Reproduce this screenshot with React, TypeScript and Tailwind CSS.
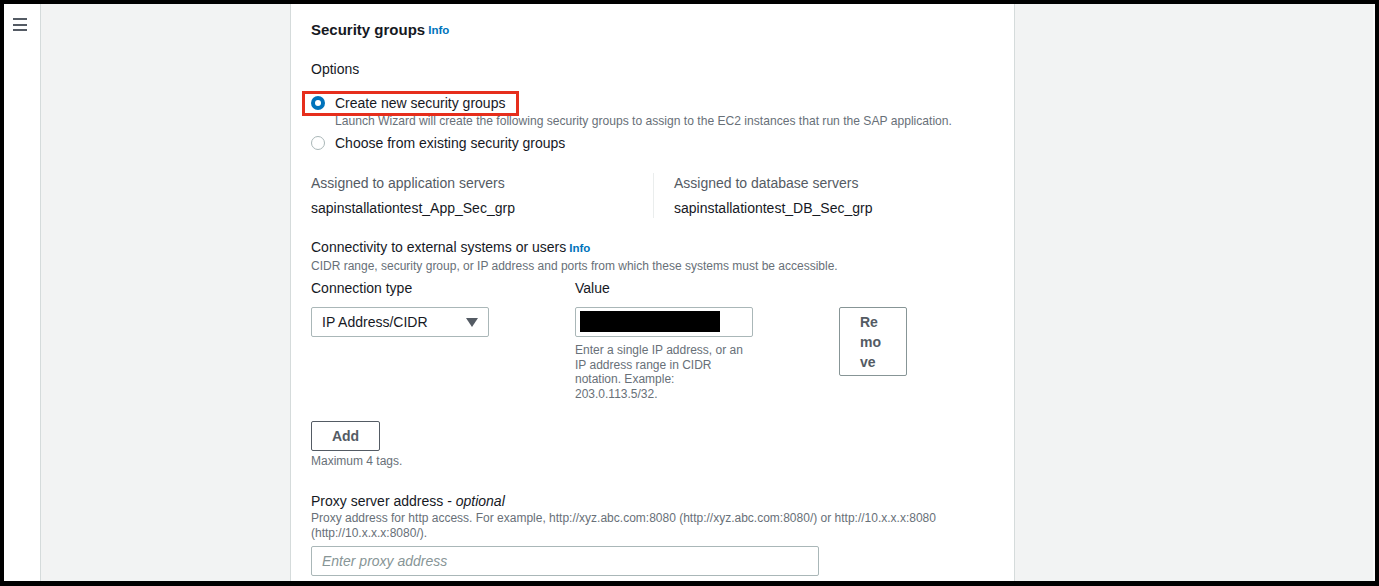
import React from "react";

const font = { fontFamily: '"Liberation Sans", Arial, sans-serif' };

function Radio({ checked }: { checked: boolean }) {
  return checked ? (
    <span className="flex h-[14px] w-[14px] items-center justify-center rounded-full bg-[#0073bb]">
      <span className="h-[6px] w-[6px] rounded-full bg-white" />
    </span>
  ) : (
    <span className="h-[14px] w-[14px] rounded-full border-[1.5px] border-[#aab7b8] bg-white" />
  );
}

export default function App() {
  return (
    <div
      className="h-[586px] w-[1379px] overflow-hidden bg-black pl-[4px] pt-[4px]"
      style={font}
    >
      <div className="flex h-[577px] w-[1371px] overflow-hidden text-[#16191f]">
        {/* side navigation toggle */}
        <div className="w-[37px] shrink-0 border-r border-[#d5dbdb] bg-white pl-[9px] pt-[14px]">
          <div className="flex w-[14px] flex-col gap-[3.5px]">
            <span className="h-[2px] w-[14px] bg-[#545b64]" />
            <span className="h-[2px] w-[14px] bg-[#545b64]" />
            <span className="h-[2px] w-[14px] bg-[#545b64]" />
          </div>
        </div>

        <div className="w-[249px] shrink-0 bg-[#f2f3f3]" />

        {/* form container */}
        <div className="w-[725px] shrink-0 border-x border-[#d5dbdb] bg-white pl-[20px] pt-[16px]">
          <div className="flex h-[20px] items-center gap-[3px]">
            <span className="text-[15px] font-bold leading-[20px]">Security groups</span>
            <span className="text-[11.5px] font-bold leading-[20px] text-[#0073bb]">Info</span>
          </div>

          <div className="mt-[19px] text-[14px] leading-[20px]">Options</div>

          <div className="relative mt-[14px]">
            <div className="pointer-events-none absolute left-[-9px] top-[-2px] h-[25px] w-[217px] border-[3px] border-[#e62e1c]" />
            <label className="flex h-[20px] items-center gap-[10px]">
              <Radio checked />
              <span className="text-[14px] leading-[20px]">Create new security groups</span>
            </label>
            <div className="pl-[24px] text-[12.1px] leading-[16px] text-[#687078]">
              Launch Wizard will create the following security groups to assign to the EC2 instances that run the SAP application.
            </div>
            <label className="mt-[4px] flex h-[20px] items-center gap-[10px]">
              <Radio checked={false} />
              <span className="text-[14px] leading-[20px]">Choose from existing security groups</span>
            </label>
          </div>

          <div className="mt-[20px] flex">
            <div className="w-[342px]">
              <div className="text-[14px] leading-[20px] text-[#545b64]">Assigned to application servers</div>
              <div className="mt-[5px] text-[14px] leading-[20px]">sapinstallationtest_App_Sec_grp</div>
            </div>
            <div className="border-l border-[#eaeded] pl-[20px]">
              <div className="text-[14px] leading-[20px] text-[#545b64]">Assigned to database servers</div>
              <div className="mt-[5px] text-[14px] leading-[20px]">sapinstallationtest_DB_Sec_grp</div>
            </div>
          </div>

          <div className="mt-[19px] flex items-baseline gap-[3px]">
            <span className="text-[14px] leading-[20px]">Connectivity to external systems or users</span>
            <span className="text-[11.5px] font-bold leading-[20px] text-[#0073bb]">Info</span>
          </div>
          <div className="text-[12px] leading-[16px] text-[#687078]">
            CIDR range, security group, or IP address and ports from which these systems must be accessible.
          </div>

          <div className="mt-[4px] flex text-[14px] leading-[20px]">
            <div className="w-[264px]">Connection type</div>
            <div>Value</div>
          </div>

          <div className="mt-[9px] flex items-start">
            <div className="flex h-[30px] w-[178px] items-center justify-between rounded-[2px] border border-[#aab7b8] pl-[10px] pr-[10px]">
              <span className="text-[14px] leading-[20px]">IP Address/CIDR</span>
              <svg width="12" height="9" viewBox="0 0 12 9">
                <path d="M0 0 H12 L6 9 Z" fill="#545b64" />
              </svg>
            </div>

            <div className="ml-[86px] w-[178px]">
              <div className="h-[30px] w-[178px] rounded-[2px] border border-[#aab7b8] pl-[4px] pt-[3px]">
                <div className="h-[21px] w-[140px] bg-black" />
              </div>
              <div className="mt-[6px] w-[170px] text-[12px] leading-[14.5px] text-[#687078]">
                Enter a single IP address, or an IP address range in CIDR notation. Example: 203.0.113.5/32.
              </div>
            </div>

            <div
              role="button"
              className="ml-[86px] h-[69px] w-[68px] break-all rounded-[2px] border border-[#879596] bg-white px-[20px] pt-[4px] text-left text-[14px] font-bold leading-[20px] text-[#545b64]"
            >
              Remove
            </div>
          </div>

          <button className="mt-[20px] flex h-[30px] w-[69px] items-center justify-center rounded-[2px] border border-[#545b64] bg-white text-[14px] font-bold leading-[20px] text-[#545b64]">
            Add
          </button>
          <div className="mt-[2px] text-[12px] leading-[16px] text-[#687078]">Maximum 4 tags.</div>

          <div className="mt-[22px] text-[14px] leading-[20px]">
            Proxy server address - <i>optional</i>
          </div>
          <div className="w-[690px] text-[12px] leading-[15px] text-[#687078]">
            Proxy address for http access. For example, http://xyz.abc.com:8080 (http://xyz.abc.com:8080/) or http://10.x.x.x:8080 (http://10.x.x.x:8080/).
          </div>
          <div className="mt-[5px] flex h-[30px] w-[508px] items-center rounded-[2px] border border-[#aab7b8] pl-[10px]">
            <span className="text-[14px] italic leading-[20px] text-[#879596]">Enter proxy address</span>
          </div>
        </div>

        <div className="flex-1 border-r-2 border-[#fafafa] bg-[#f2f3f3]" />
      </div>
    </div>
  );
}
